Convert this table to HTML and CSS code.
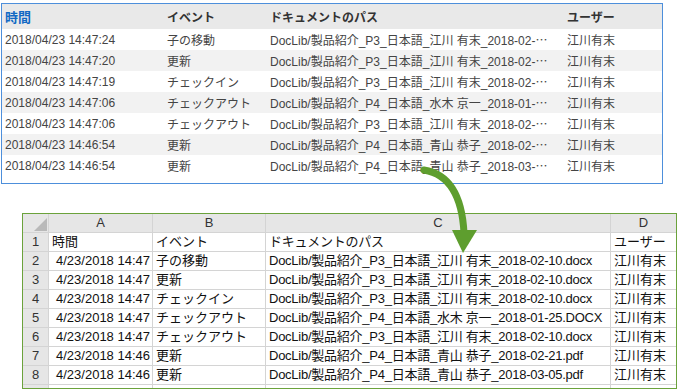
FILE: index.html
```html
<!DOCTYPE html>
<html lang="ja">
<head>
<meta charset="utf-8">
<link rel="stylesheet" href="styles.css">
</head>
<body>
<div class="page">
  <div class="panel">
    <table class="list">
      <colgroup><col class="c-time"><col class="c-event"><col class="c-path"><col class="c-user"></colgroup>
      <thead>
        <tr><th class="sorted">時間</th><th>イベント</th><th>ドキュメントのパス</th><th>ユーザー</th></tr>
      </thead>
      <tbody>
        <tr><td>2018/04/23 14:47:24</td><td>子の移動</td><td>DocLib/製品紹介_P3_日本語_江川 有末_2018-02-<span class="ell">…</span></td><td>江川有末</td></tr>
        <tr><td>2018/04/23 14:47:20</td><td>更新</td><td>DocLib/製品紹介_P3_日本語_江川 有末_2018-02-<span class="ell">…</span></td><td>江川有末</td></tr>
        <tr><td>2018/04/23 14:47:19</td><td>チェックイン</td><td>DocLib/製品紹介_P3_日本語_江川 有末_2018-02-<span class="ell">…</span></td><td>江川有末</td></tr>
        <tr><td>2018/04/23 14:47:06</td><td>チェックアウト</td><td>DocLib/製品紹介_P4_日本語_水木 京一_2018-01-<span class="ell">…</span></td><td>江川有末</td></tr>
        <tr><td>2018/04/23 14:47:06</td><td>チェックアウト</td><td>DocLib/製品紹介_P3_日本語_江川 有末_2018-02-<span class="ell">…</span></td><td>江川有末</td></tr>
        <tr><td>2018/04/23 14:46:54</td><td>更新</td><td>DocLib/製品紹介_P4_日本語_青山 恭子_2018-02-<span class="ell">…</span></td><td>江川有末</td></tr>
        <tr><td>2018/04/23 14:46:54</td><td>更新</td><td>DocLib/製品紹介_P4_日本語_青山 恭子_2018-03-<span class="ell">…</span></td><td>江川有末</td></tr>
      </tbody>
    </table>
  </div>

  <div class="sheet">
    <div class="grid">
      <div class="hd corner"><span class="tri"></span></div><div class="hd">A</div><div class="hd">B</div><div class="hd">C</div><div class="hd">D</div>

      <div class="rn">1</div><div class="cell">時間</div><div class="cell">イベント</div><div class="cell path">ドキュメントのパス</div><div class="cell">ユーザー</div>
      <div class="rn">2</div><div class="cell num">4/23/2018 14:47</div><div class="cell">子の移動</div><div class="cell path">DocLib/製品紹介_P3_日本語_江川 有末_2018-02-10.docx</div><div class="cell">江川有末</div>
      <div class="rn">3</div><div class="cell num">4/23/2018 14:47</div><div class="cell">更新</div><div class="cell path">DocLib/製品紹介_P3_日本語_江川 有末_2018-02-10.docx</div><div class="cell">江川有末</div>
      <div class="rn">4</div><div class="cell num">4/23/2018 14:47</div><div class="cell">チェックイン</div><div class="cell path">DocLib/製品紹介_P3_日本語_江川 有末_2018-02-10.docx</div><div class="cell">江川有末</div>
      <div class="rn">5</div><div class="cell num">4/23/2018 14:47</div><div class="cell">チェックアウト</div><div class="cell path">DocLib/製品紹介_P4_日本語_水木 京一_2018-01-25.DOCX</div><div class="cell">江川有末</div>
      <div class="rn">6</div><div class="cell num">4/23/2018 14:47</div><div class="cell">チェックアウト</div><div class="cell path">DocLib/製品紹介_P3_日本語_江川 有末_2018-02-10.docx</div><div class="cell">江川有末</div>
      <div class="rn">7</div><div class="cell num">4/23/2018 14:46</div><div class="cell">更新</div><div class="cell path">DocLib/製品紹介_P4_日本語_青山 恭子_2018-02-21.pdf</div><div class="cell">江川有末</div>
      <div class="rn">8</div><div class="cell num">4/23/2018 14:46</div><div class="cell">更新</div><div class="cell path">DocLib/製品紹介_P4_日本語_青山 恭子_2018-03-05.pdf</div><div class="cell">江川有末</div>
      <div class="rn"></div><div class="cell"></div><div class="cell"></div><div class="cell"></div><div class="cell"></div>
    </div>
  </div>

  <svg class="arrow" width="679" height="390" viewBox="0 0 679 390" aria-hidden="true">
    <path d="M424 170 Q461 176 464 233" fill="none" stroke="#5e9e2e" stroke-width="7" stroke-linecap="round"/>
    <polygon points="452,230 477,230 463,253" fill="#5e9e2e"/>
  </svg>
</div>
</body>
</html>
```

FILE: styles.css
```css
html, body {
  margin: 0;
  padding: 0;
  background: #ffffff;
}

body {
  font-family: "Liberation Sans", "Noto Sans CJK JP", sans-serif;
}

.page {
  position: relative;
  width: 679px;
  height: 390px;
  overflow: hidden;
  box-sizing: border-box;
  padding: 3px 0 0 1px;
}

/* ---------- top list panel ---------- */
.panel {
  width: 662px;
  height: 181px;
  box-sizing: border-box;
  border: 1px solid #4d8fdb;
  overflow: hidden;
}

.list {
  width: 660px;
  table-layout: fixed;
  border-collapse: collapse;
  font-size: 12px;
  color: #444444;
}

.c-time { width: 162px; }
.c-event { width: 103px; }
.c-path { width: 297px; }
.c-user { width: 98px; }

.list th {
  height: 25px;
  padding: 0 0 0 3px;
  background: #e9e9e9;
  text-align: left;
  font-weight: bold;
  font-size: 12px;
  color: #333333;
  white-space: nowrap;
}

.list th.sorted {
  color: #1269c4;
  font-size: 13px;
}

.list td {
  height: 21px;
  padding: 0 0 0 3px;
  white-space: nowrap;
  overflow: hidden;
}

.list tbody tr:nth-child(even) td {
  background: #f2f2f2;
}

.ell {
  font-family: "Noto Sans CJK JP", sans-serif;
}

/* ---------- spreadsheet ---------- */
.sheet {
  margin: 29px 0 0 21px;
  width: 655px;
  height: 176px;
  box-sizing: border-box;
  border: 1px solid #6ba23b;
  overflow: hidden;
}

.grid {
  display: grid;
  grid-template-columns: 25px 103px 112px 344px 65px;
  grid-auto-rows: 18px;
  gap: 1px;
  background: #d4d4d4;
  font-size: 13px;
  color: #111111;
}

.hd {
  background: #e6e6e6;
  text-align: center;
  line-height: 18px;
  color: #333333;
}

.corner {
  position: relative;
}

.tri {
  position: absolute;
  right: 1px;
  bottom: 1px;
  width: 0;
  height: 0;
  border-left: 13px solid transparent;
  border-bottom: 13px solid #b9b9b9;
}

.rn {
  background: #e6e6e6;
  text-align: center;
  line-height: 18px;
  color: #333333;
}

.cell {
  background: #ffffff;
  line-height: 18px;
  padding: 0 0 0 3px;
  white-space: nowrap;
  overflow: hidden;
}

.cell.path {
  letter-spacing: -0.25px;
}

.cell.num {
  text-align: right;
  padding: 0 2px 0 0;
}

/* ---------- arrow overlay ---------- */
.arrow {
  position: absolute;
  left: 0;
  top: 0;
  pointer-events: none;
}
```
